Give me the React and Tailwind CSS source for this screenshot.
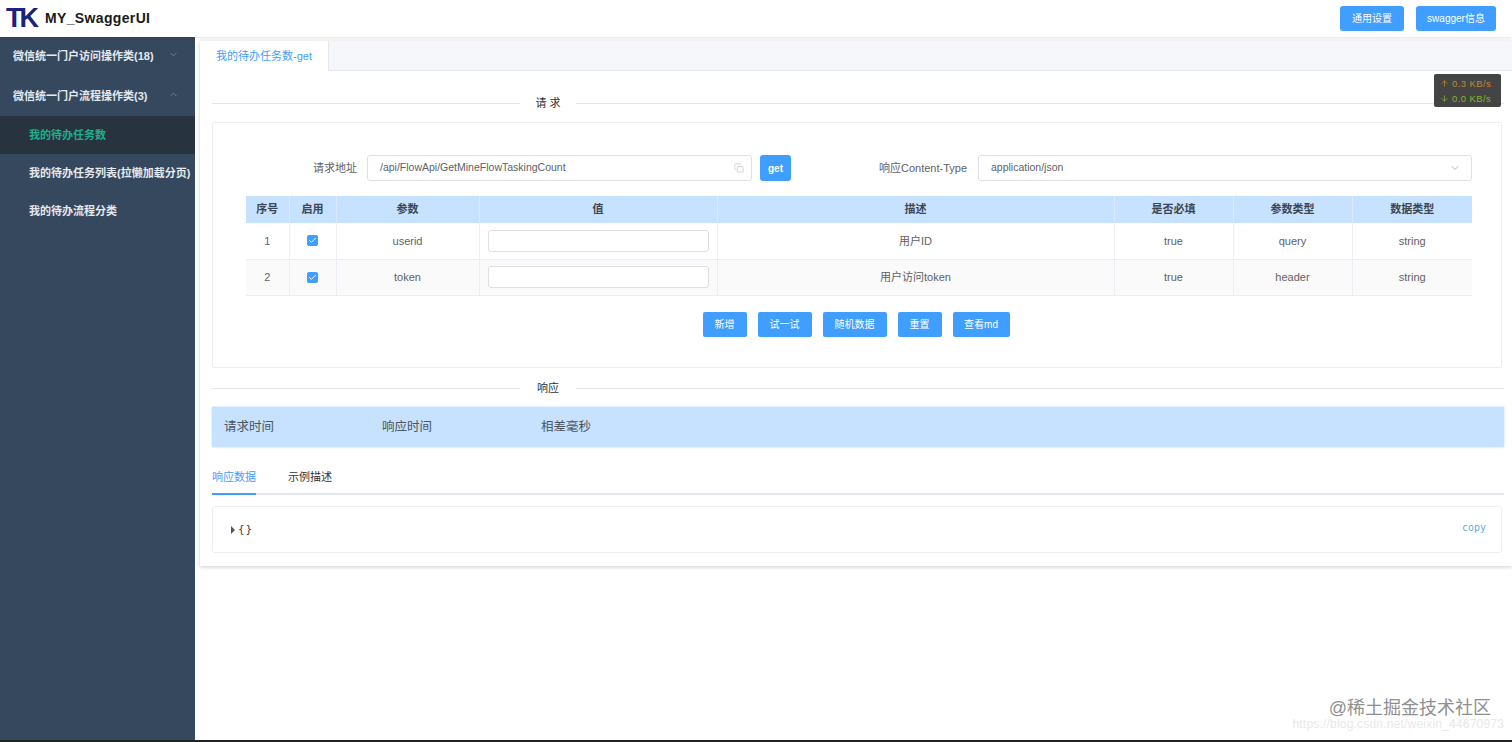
import { ChevronDown, ChevronUp, Check, Copy, ArrowUp, ArrowDown } from 'lucide-react'

const font = { fontFamily: '"Liberation Sans", "Noto Sans CJK SC", sans-serif' }

const rows = [
  { id: 1, name: 'userid', desc: '用户ID', type: 'query' },
  { id: 2, name: 'token', desc: '用户访问token', type: 'header' },
]

const actions = [
  { label: '新增', w: 'w-[44px]' },
  { label: '试一试', w: 'w-[54px]' },
  { label: '随机数据', w: 'w-[64px]' },
  { label: '重置', w: 'w-[44px]' },
  { label: '查看md', w: 'w-[57px]' },
]

function Divider({ label, className }) {
  return (
    <div className={`flex items-center ${className}`}>
      <div className="flex-1 h-px bg-[#e4e7ed]" />
      <span className="w-[56px] text-center text-[11px] text-[#303133]">{label}</span>
      <div className="w-[620px] h-px bg-[#e4e7ed] flex-auto" />
    </div>
  )
}

function Sidebar() {
  return (
    <aside className="w-[195px] shrink-0 bg-[#35485e] text-[11px] font-bold text-[#e4e9ee]">
      <div className="h-[39px] pl-[13px] pr-[16px] flex items-center justify-between">
        <span>微信统一门户访问操作类(18)</span>
        <ChevronDown size={11} className="text-[#6f8093] mr-[0px] -mt-1" />
      </div>
      <div className="h-[40px] pl-[13px] pr-[16px] flex items-center justify-between">
        <span>微信统一门户流程操作类(3)</span>
        <ChevronUp size={11} className="text-[#6f8093] -mt-1" />
      </div>
      <div className="h-[38px] pl-[29px] flex items-center bg-[#27333f] text-[#1fae8c]">我的待办任务数</div>
      <div className="h-[38px] pl-[29px] flex items-center whitespace-nowrap">我的待办任务列表(拉懒加载分页)</div>
      <div className="h-[38px] pl-[29px] flex items-center">我的待办流程分类</div>
    </aside>
  )
}

function ParamTable() {
  return (
    <table className="w-[1226px] ml-[33px] mt-[15px] table-fixed border-collapse text-[11px] text-[#606266]">
      <colgroup>
        <col className="w-[43px]" />
        <col className="w-[47px]" />
        <col className="w-[143px]" />
        <col className="w-[238px]" />
        <col className="w-[397px]" />
        <col className="w-[119px]" />
        <col className="w-[119px]" />
        <col className="w-[120px]" />
      </colgroup>
      <thead>
        <tr className="h-[27px] bg-[#c6e2ff] font-bold text-[#3d4652]">
          {['序号', '启用', '参数', '值', '描述', '是否必填', '参数类型', '数据类型'].map(h => (
            <th key={h} className="border-r border-[#dcebfb] last:border-r-0 font-bold">{h}</th>
          ))}
        </tr>
      </thead>
      <tbody>
        {rows.map(r => (
          <tr key={r.id} className={`h-[36px] border-b border-[#ebeef5] text-center ${r.id === 2 ? 'bg-[#fafafa]' : 'bg-white'}`}>
            <td className="border-r border-[#ebeef5]">{r.id}</td>
            <td className="border-r border-[#ebeef5]">
              <span className="mx-auto flex items-center justify-center w-[11px] h-[11px] rounded-[2px] bg-[#409eff]">
                <Check size={9} strokeWidth={2.5} className="text-white" />
              </span>
            </td>
            <td className="border-r border-[#ebeef5]">{r.name}</td>
            <td className="border-r border-[#ebeef5] px-[8px]">
              <div className="h-[22px] bg-white border border-[#dcdfe6] rounded-[3px]" />
            </td>
            <td className="border-r border-[#ebeef5]">{r.desc}</td>
            <td className="border-r border-[#ebeef5]">true</td>
            <td className="border-r border-[#ebeef5]">{r.type}</td>
            <td>string</td>
          </tr>
        ))}
      </tbody>
    </table>
  )
}

export default function App() {
  return (
    <div className="relative h-screen flex flex-col overflow-hidden bg-white" style={font}>
      <header className="h-[37px] shrink-0 flex items-center justify-between pl-[6px] pr-[16px] bg-white shadow-[0_1px_3px_rgba(0,0,0,0.12)] z-10">
        <div className="flex items-center">
          <span className="w-[30px] text-[27px] leading-none font-bold tracking-[-3px] text-[#1c2180]">TK</span>
          <span className="ml-[9px] text-[14px] font-bold tracking-[0.35px] text-[#1a1a1a]">MY_SwaggerUI</span>
        </div>
        <div className="flex items-center gap-[12px] text-[10px] text-white">
          <button className="w-[64px] h-[25px] rounded-[3px] bg-[#409eff]">通用设置</button>
          <button className="w-[80px] h-[25px] rounded-[3px] bg-[#409eff]">swagger信息</button>
        </div>
      </header>

      <div className="flex flex-1 min-h-0">
        <Sidebar />
        <main className="flex-1 min-w-0 pt-[4px] pl-[5px]">
          <section className="h-[525px] bg-white shadow-[0_1px_4px_rgba(0,0,0,0.2)]">
            <div className="h-[30px] flex bg-[#f5f7fa] border-b border-[#e4e7ed]">
              <div className="w-[129px] h-[30px] flex items-center justify-center bg-white border-r border-[#e4e7ed] text-[11px] text-[#409eff]">
                我的待办任务数-get
              </div>
            </div>

            <div className="pl-[12px] pr-[8px]">
              <Divider label="请 求" className="mt-[24px] h-[16px]" />

              <div className="mt-[11px] mr-[2px] h-[246px] border border-[#ebeef5] rounded-[2px]">
                <div className="flex items-center mt-[32px] text-[11px] text-[#606266]">
                  <span className="ml-[100px] w-[46px]">请求地址</span>
                  <div className="ml-[8px] w-[385px] h-[26px] flex items-center justify-between pl-[12px] pr-[7px] border border-[#dcdfe6] rounded-[3px]">
                    <span className="text-[10.5px]">/api/FlowApi/GetMineFlowTaskingCount</span>
                    <Copy size={10} className="text-[#c8ccd2]" />
                  </div>
                  <button className="ml-[8px] w-[31px] h-[26px] rounded-[3px] bg-[#409eff] text-[10px] font-bold text-white">get</button>
                  <span className="ml-[88px] w-[90px] whitespace-nowrap">响应Content-Type</span>
                  <div className="ml-[9px] w-[494px] h-[26px] flex items-center justify-between pl-[12px] pr-[10px] border border-[#dcdfe6] rounded-[3px]">
                    <span className="text-[10.5px]">application/json</span>
                    <ChevronDown size={12} className="text-[#b4b8bf]" />
                  </div>
                </div>

                <ParamTable />

                <div className="flex justify-center gap-[11px] mt-[16px] ml-[-2px] text-[10px] text-white">
                  {actions.map(a => (
                    <button key={a.label} className={`${a.w} h-[25px] rounded-[2px] bg-[#409eff]`}>{a.label}</button>
                  ))}
                </div>
              </div>

              <Divider label="响应" className="mt-[12px] h-[16px]" />

              <div className="mt-[11px] h-[40px] flex items-center pl-[12px] bg-[#c6e2ff] text-[12.5px] text-[#4a5560] shadow-[0_0_2px_rgba(64,158,255,0.4)]">
                <span className="w-[158px]">请求时间</span>
                <span className="w-[159px]">响应时间</span>
                <span>相差毫秒</span>
              </div>

              <div className="mt-[22px] h-[26px] flex text-[11px] text-[#303133] border-b-2 border-[#e4e7ed]">
                <span className="w-[44px] h-[26px] text-center text-[#409eff] border-b-2 border-[#409eff]">响应数据</span>
                <span className="ml-[32px]">示例描述</span>
              </div>

              <div className="relative mt-[11px] mr-[2px] h-[47px] flex items-center pl-[18px] border border-[#ebeef5] rounded-[3px]">
                <span className="w-0 h-0 border-y-[4px] border-y-transparent border-l-[4px] border-l-[#555]" />
                <span className="ml-[3px] mt-[1px] text-[11px] text-[#444] tracking-[1px]" style={{ fontFamily: '"DejaVu Sans Mono", monospace' }}>{'{}'}</span>
                <span className="absolute right-[15px] top-[13px] text-[10px] text-[#5dade2]" style={{ fontFamily: '"DejaVu Sans Mono", monospace' }}>copy</span>
              </div>
            </div>
          </section>
        </main>
      </div>
      <div className="h-[2px] shrink-0 bg-[#222]" />

      {/* net speed widget */}
      <div className="absolute left-[1434px] top-[74px] w-[67px] h-[33px] px-[6px] py-[2px] rounded-[2px] bg-[#444] text-[9.5px] leading-[15px] tracking-[0.4px] whitespace-nowrap">
        <div className="flex items-center text-[#c5862c]"><ArrowUp size={9} className="mr-[3px]" />0.3 KB/s</div>
        <div className="flex items-center text-[#86b52e]"><ArrowDown size={9} className="mr-[3px]" />0.0 KB/s</div>
      </div>

      {/* watermark */}
      <div className="absolute right-[20px] bottom-[12px] text-right leading-none pointer-events-none">
        <div className="text-[18px] text-[#8f8f8f] mr-[1px]">@稀土掘金技术社区</div>
        <div className="mt-[1px] mr-[-12px] text-[12px] text-[#e8e8e8] tracking-[0.2px]">https://blog.csdn.net/weixin_44670973</div>
      </div>
    </div>
  )
}
